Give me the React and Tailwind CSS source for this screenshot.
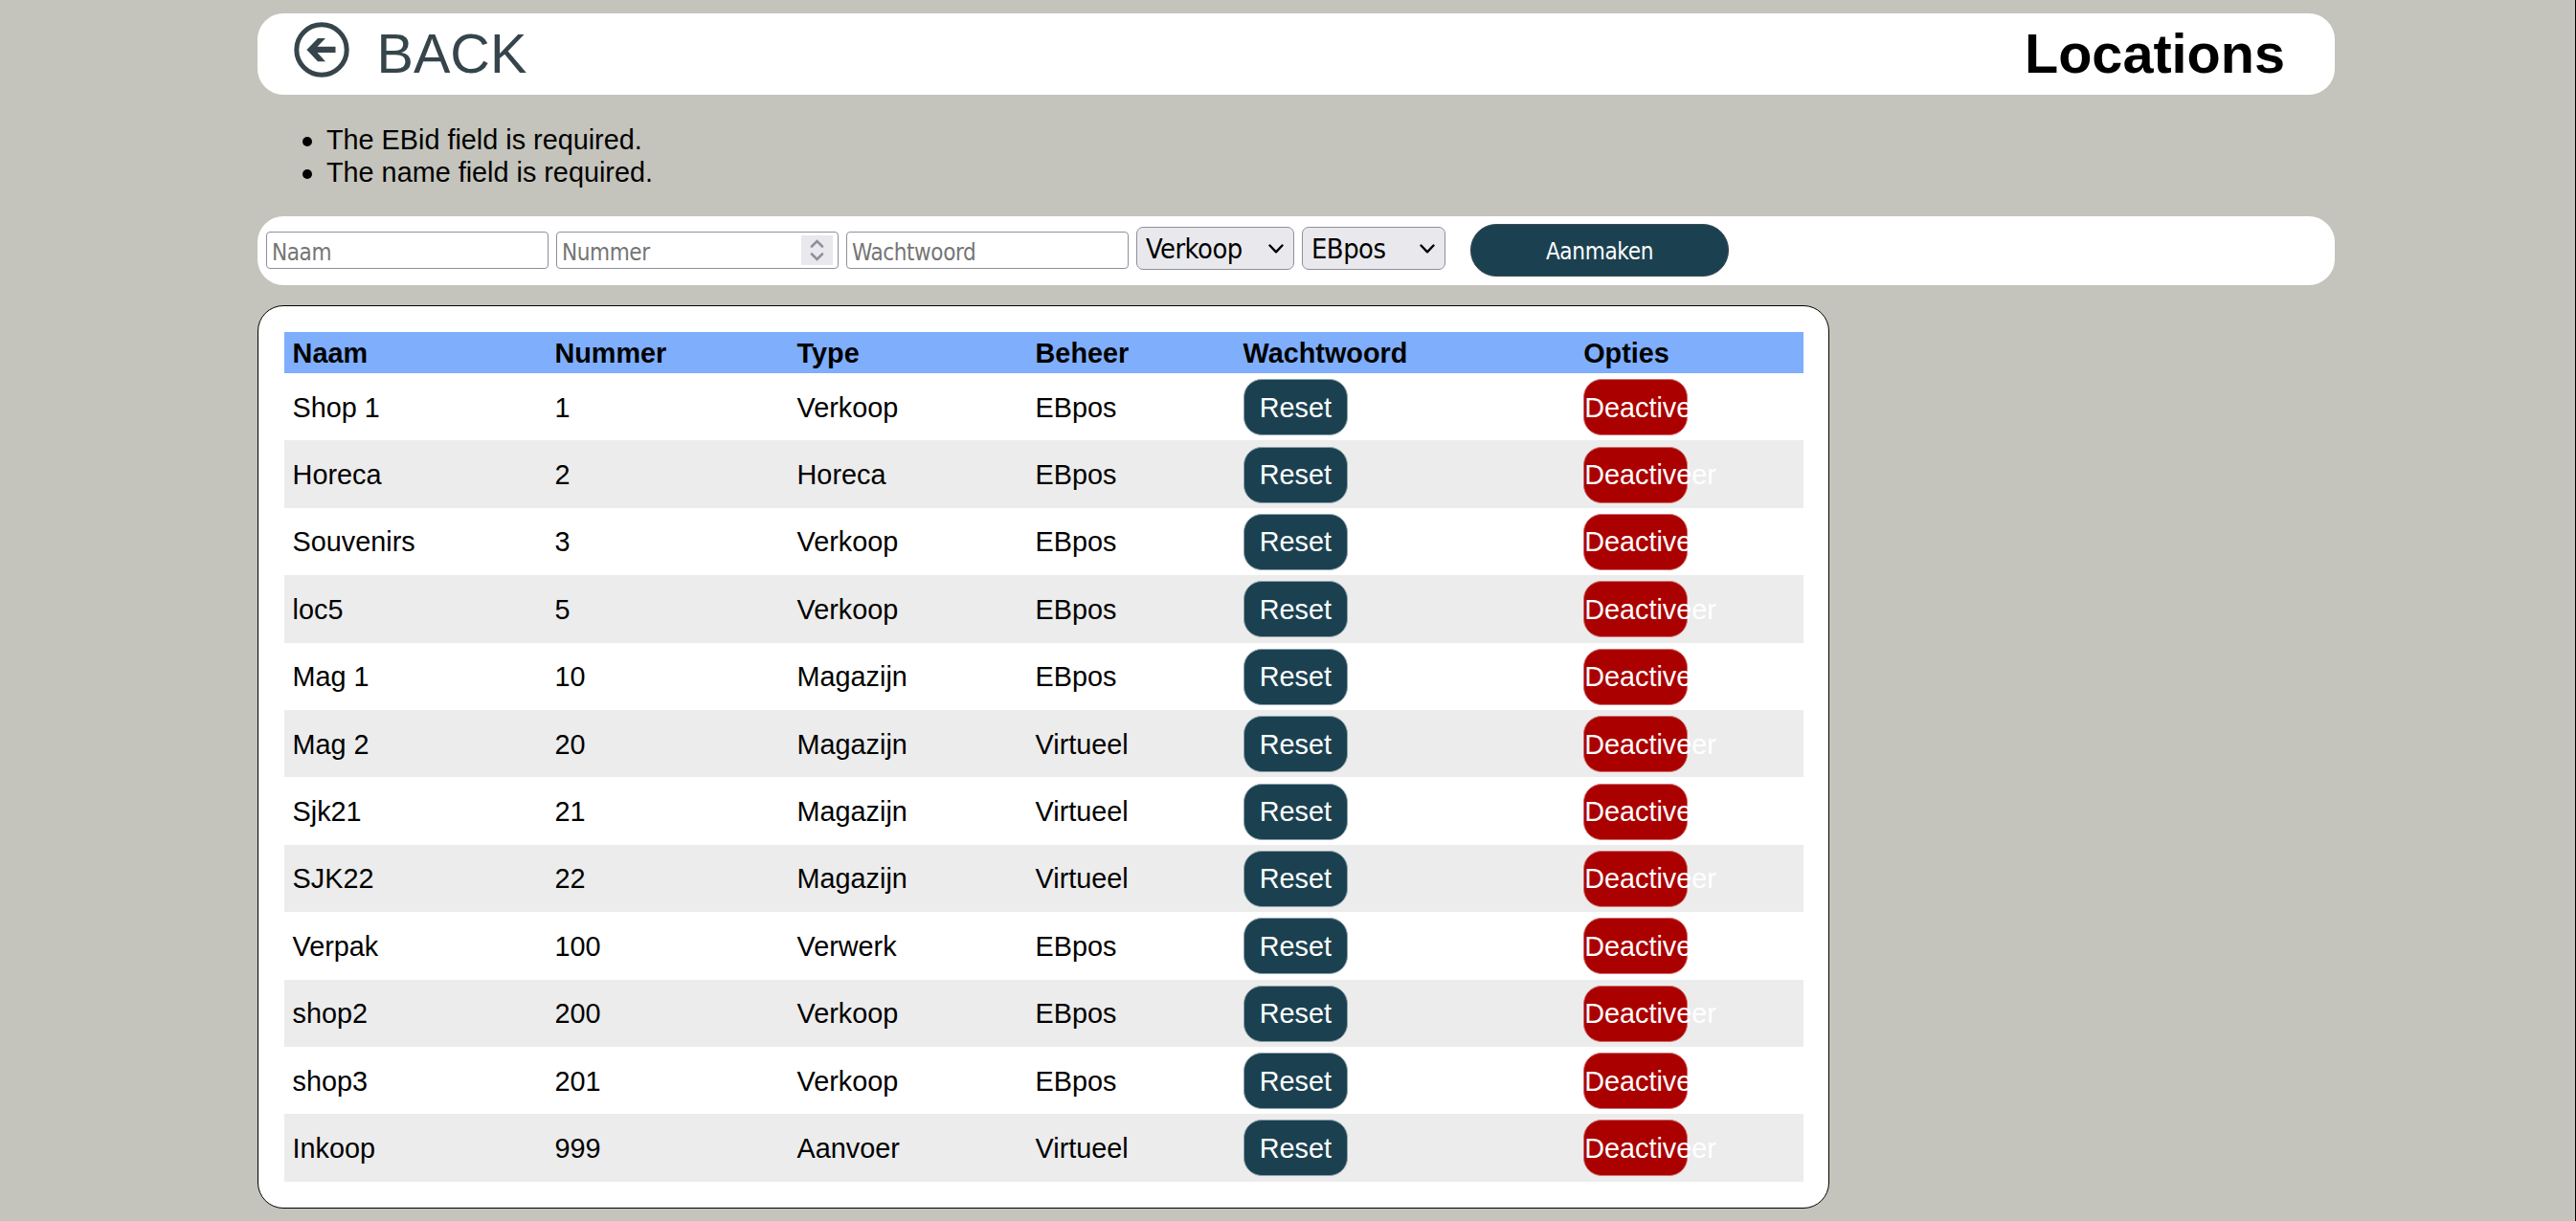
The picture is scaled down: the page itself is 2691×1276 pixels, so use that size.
import { useState } from "react";

const locations = [
  { name: "Shop 1", number: 1, type: "Verkoop", manager: "EBpos" },
  { name: "Horeca", number: 2, type: "Horeca", manager: "EBpos" },
  { name: "Souvenirs", number: 3, type: "Verkoop", manager: "EBpos" },
  { name: "loc5", number: 5, type: "Verkoop", manager: "EBpos" },
  { name: "Mag 1", number: 10, type: "Magazijn", manager: "EBpos" },
  { name: "Mag 2", number: 20, type: "Magazijn", manager: "Virtueel" },
  { name: "Sjk21", number: 21, type: "Magazijn", manager: "Virtueel" },
  { name: "SJK22", number: 22, type: "Magazijn", manager: "Virtueel" },
  { name: "Verpak", number: 100, type: "Verwerk", manager: "EBpos" },
  { name: "shop2", number: 200, type: "Verkoop", manager: "EBpos" },
  { name: "shop3", number: 201, type: "Verkoop", manager: "EBpos" },
  { name: "Inkoop", number: 999, type: "Aanvoer", manager: "Virtueel" },
];

const errors = ["The EBid field is required.", "The name field is required."];

const columns =
  "grid grid-cols-[273.8px_253.2px_249px_217px_355.6px_1fr] items-center pl-[8.6px]";

const formFont =
  "font-['DejaVu_Sans_Condensed','DejaVu_Sans',sans-serif] [font-stretch:condensed]";

function BackIcon() {
  return (
    <svg viewBox="0 0 58 58" className="h-[58px] w-[58px]" fill="none">
      <circle cx="29" cy="29" r="26.2" stroke="currentColor" strokeWidth="5" />
      <path
        d="M13.4 29 L25 17 H33 L24.5 25.8 H43.5 V32 H24.5 L33 41.3 H25 Z"
        fill="currentColor"
      />
    </svg>
  );
}

function Field({ placeholder, children }) {
  return (
    <div className="relative h-[39px] w-[295px]">
      <input
        placeholder={placeholder}
        className={`${formFont} block h-full w-full rounded-[4px] border border-[#8f8f9d] bg-white pl-[5px] pt-[4px] text-[24px] tracking-[-0.4px] placeholder:text-[#757575] placeholder:opacity-100`}
      />
      {children}
    </div>
  );
}

function Spinner() {
  return (
    <div className="absolute right-[6px] top-[4px] h-[31px] w-[33px] bg-[#e9e9ed]">
      <svg
        viewBox="0 0 33 31"
        className="h-full w-full"
        fill="none"
        stroke="#8f8f9d"
        strokeWidth="2.6"
        strokeLinecap="round"
      >
        <path d="M11 11.5 L16.5 6 L22 11.5 M11 19.5 L16.5 25 L22 19.5" />
      </svg>
    </div>
  );
}

function Select({ options, className }) {
  const [value, setValue] = useState(options[0]);

  return (
    <div className={`relative h-[45px] ${className}`}>
      <select
        value={value}
        onChange={(e) => setValue(e.target.value)}
        className={`${formFont} block h-full w-full appearance-none rounded-[7px] border border-[#8f8f9d] bg-[#e9e9ed] pl-[9px] pt-[2px] text-[28.8px] leading-[41px] tracking-[-0.5px] text-black`}
      >
        {options.map((option) => (
          <option key={option}>{option}</option>
        ))}
      </select>
      <svg
        viewBox="0 0 16 10"
        className="pointer-events-none absolute right-[11px] top-[18px] h-[10px] w-[16px]"
        fill="none"
        stroke="black"
        strokeWidth="2.4"
        strokeLinecap="round"
        strokeLinejoin="round"
      >
        <path d="M1.5 1.5 L8 8.3 L14.5 1.5" />
      </svg>
    </div>
  );
}

function App() {
  return (
    <div className="h-[1276px] overflow-hidden border-r border-black bg-[#c4c4bc] pl-[269px] pt-[14px] font-['Liberation_Sans',Arial,sans-serif] text-[28.8px] leading-[34px] text-black">
      <header className="flex h-[85px] w-[2170px] justify-between rounded-[27px] bg-white pl-[38px] pr-[52px] text-[57.6px] leading-[85px]">
        <a href="#" className="flex gap-[28.5px] text-[#36454b]">
          <span className="mt-[9px]">
            <BackIcon />
          </span>
          BACK
        </a>
        <h1 className="font-bold">Locations</h1>
      </header>

      <ul className="mt-[30px]">
        {errors.map((error) => (
          <li key={error} className="flex h-[34px] items-center pl-[47px]">
            <span className="mr-[15px] mt-[3px] h-[10px] w-[10px] rounded-full bg-black" />
            {error}
          </li>
        ))}
      </ul>

      <form className="mt-[29px] flex h-[72px] w-[2170px] rounded-[27px] bg-white pl-[9px]">
        <div className="mt-[16px] flex gap-[8px]">
          <Field placeholder="Naam" />
          <Field placeholder="Nummer">
            <Spinner />
          </Field>
          <Field placeholder="Wachtwoord" />
        </div>
        <div className="ml-[8px] mt-[11px] flex gap-[8px]">
          <Select options={["Verkoop", "Horeca", "Magazijn"]} className="w-[165px]" />
          <Select options={["EBpos", "Virtueel"]} className="w-[150px]" />
        </div>
        <button
          type="button"
          className={`${formFont} ml-[26px] mt-[8px] h-[55px] w-[270px] rounded-[27px] border border-[#3c4a50] bg-[#1b4151] pt-[3px] text-[24px] tracking-[-0.3px] text-white`}
        >
          Aanmaken
        </button>
      </form>

      <section className="mt-[21px] h-[944px] w-[1642px] rounded-[27px] border border-black bg-white pl-[27px] pr-[26px] pt-[27px]">
        <div className={`${columns} h-[43px] bg-[#7eaefc] pt-[1px] font-bold`}>
          <span>Naam</span>
          <span>Nummer</span>
          <span>Type</span>
          <span>Beheer</span>
          <span>Wachtwoord</span>
          <span>Opties</span>
        </div>
        {locations.map((location) => (
          <div
            key={location.number}
            className={`${columns} h-[70.4px] pt-[1px] odd:bg-[#ececec]`}
          >
            <span>{location.name}</span>
            <span>{location.number}</span>
            <span>{location.type}</span>
            <span>{location.manager}</span>
            <button className="h-[59px] w-[109.5px] rounded-[19px] border border-[#8fa3ab] bg-[#1b4151] text-white">
              Reset
            </button>
            <button className="h-[59px] w-[108.5px] rounded-[19px] border border-[#d07070] bg-[#ab0000] text-left text-white">
              Deactiveer
            </button>
          </div>
        ))}
      </section>
    </div>
  );
}

export default App;
